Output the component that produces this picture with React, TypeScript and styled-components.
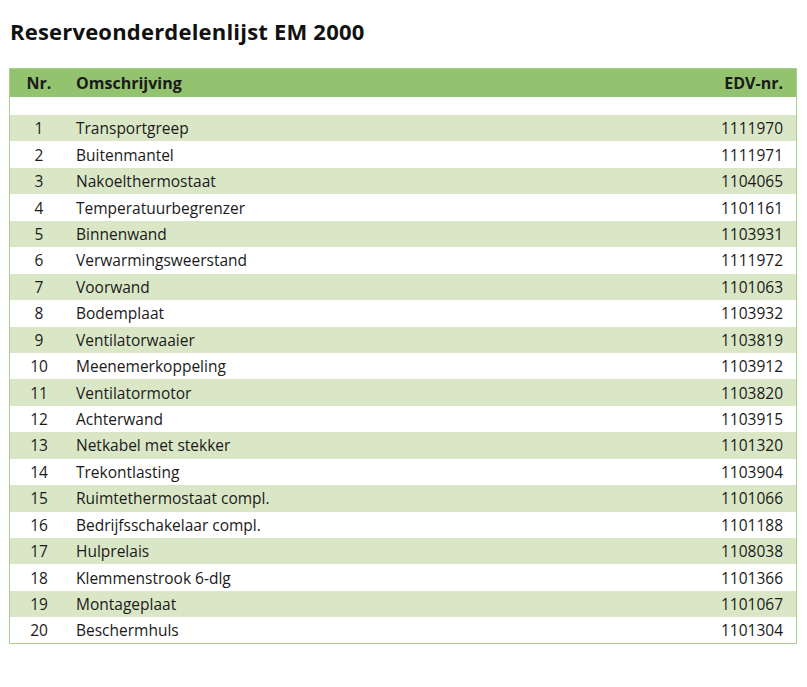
import { FC } from 'react';
import styled, { createGlobalStyle } from 'styled-components';

interface Part {
  nr: number;
  name: string;
  edv: string;
}

const PARTS: Part[] = [
  { nr: 1, name: 'Transportgreep', edv: '1111970' },
  { nr: 2, name: 'Buitenmantel', edv: '1111971' },
  { nr: 3, name: 'Nakoelthermostaat', edv: '1104065' },
  { nr: 4, name: 'Temperatuurbegrenzer', edv: '1101161' },
  { nr: 5, name: 'Binnenwand', edv: '1103931' },
  { nr: 6, name: 'Verwarmingsweerstand', edv: '1111972' },
  { nr: 7, name: 'Voorwand', edv: '1101063' },
  { nr: 8, name: 'Bodemplaat', edv: '1103932' },
  { nr: 9, name: 'Ventilatorwaaier', edv: '1103819' },
  { nr: 10, name: 'Meenemerkoppeling', edv: '1103912' },
  { nr: 11, name: 'Ventilatormotor', edv: '1103820' },
  { nr: 12, name: 'Achterwand', edv: '1103915' },
  { nr: 13, name: 'Netkabel met stekker', edv: '1101320' },
  { nr: 14, name: 'Trekontlasting', edv: '1103904' },
  { nr: 15, name: 'Ruimtethermostaat compl.', edv: '1101066' },
  { nr: 16, name: 'Bedrijfsschakelaar compl.', edv: '1101188' },
  { nr: 17, name: 'Hulprelais', edv: '1108038' },
  { nr: 18, name: 'Klemmenstrook 6-dlg', edv: '1101366' },
  { nr: 19, name: 'Montageplaat', edv: '1101067' },
  { nr: 20, name: 'Beschermhuls', edv: '1101304' },
];

const App: FC = () => (
  <>
    <GlobalStyle />
    <Page>
      <Title>Reserveonderdelenlijst EM 2000</Title>
      <PartsTable>
        <thead>
          <tr>
            <HeadCell align="center">Nr.</HeadCell>
            <HeadCell>Omschrijving</HeadCell>
            <HeadCell align="right">EDV-nr.</HeadCell>
          </tr>
        </thead>
        <tbody>
          <Spacer>
            <td colSpan={3} />
          </Spacer>
          {PARTS.map((part) => (
            <Row key={part.nr} $shaded={part.nr % 2 === 1}>
              <Cell align="center">{part.nr}</Cell>
              <Cell>{part.name}</Cell>
              <Cell align="right">{part.edv}</Cell>
            </Row>
          ))}
        </tbody>
      </PartsTable>
    </Page>
  </>
);

// Styles
const GlobalStyle = createGlobalStyle`
  body {
    margin: 0;
    background: #fff;
    font-family: "Open Sans", "Noto Sans", sans-serif;
    color: #1a1a1a;
  }
`;

const Page = styled.div`
  padding: 16px 10px 0 9px;
`;

const Title = styled.h1`
  margin: 0 0 22px 1px;
  font-size: 22px;
  line-height: 30px;
  font-weight: 700;
  color: #111;
  letter-spacing: 0.2px;
`;

const PartsTable = styled.table`
  width: 788px;
  border-collapse: collapse;
  border: 1.5px solid #a8d08c;
  font-size: 15.5px;
`;

const HeadCell = styled.th<{ align?: string }>`
  background: #94c36f;
  height: 28px;
  padding: 0 13px 0 0;
  font-size: 16px;
  font-weight: 700;
  text-align: ${(p) => p.align || 'left'};
  &:first-child {
    width: 58px;
    padding: 0 8px 0 0;
  }
`;

const Spacer = styled.tr`
  height: 18px;
`;

const Row = styled.tr<{ $shaded: boolean }>`
  height: 26.45px;
  background: ${(p) => (p.$shaded ? '#dae7c6' : '#fff')};
`;

const Cell = styled.td<{ align?: string }>`
  padding: 0 13px 0 0;
  text-align: ${(p) => p.align || 'left'};
  &:first-child {
    padding: 0 8px 0 0;
  }
`;

export default App;
